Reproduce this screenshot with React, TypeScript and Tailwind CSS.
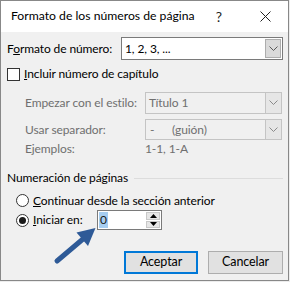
import React from "react";

const font = { fontFamily: 'Lato, "Noto Sans", sans-serif' };

const Chevron = ({ color = "#606060" }: { color?: string }) => (
	<svg width="9" height="6" viewBox="0 0 9 6">
		<path d="M0.5 0.5 L4.5 4.5 L8.5 0.5" fill="none" stroke={color} strokeWidth="1" />
	</svg>
);

const Select = ({
	value,
	disabled,
	className,
}: {
	value: React.ReactNode;
	disabled?: boolean;
	className: string;
}) => (
	<div
		className={`flex items-stretch border ${
			disabled ? "border-[#c4c4c4] bg-[#f0f0f0] text-[#6f6f6f]" : "border-[#7a7a7a] bg-white text-black"
		} ${className}`}>
		<div className="flex-1 flex items-center pl-[3px]">{value}</div>
		<div
			className={`w-[16px] flex items-center justify-center border-l ${
				disabled ? "border-[#c4c4c4] bg-[#e6e6e6]" : "border-[#adadad] bg-[#dadada] m-[1px] border"
			}`}>
			<Chevron color={disabled ? "#8a8a8a" : "#5a5a5a"} />
		</div>
	</div>
);

const Radio = ({ checked }: { checked?: boolean }) => (
	<div className="w-[13px] h-[13px] shrink-0 rounded-full border border-[#333] bg-white flex items-center justify-center">
		{checked && <div className="w-[7px] h-[7px] rounded-full bg-[#1a1a1a]" />}
	</div>
);

export default function App() {
	return (
		<div className="w-[290px] h-[282px] bg-[#ececec] relative whitespace-nowrap" style={font}>
			<div className="w-[289px] h-[281px] border border-[#888] bg-[#f0f0f0] flex flex-col text-[12px] tracking-[-0.1px] text-black leading-none">
				{/* Title bar */}
				<div className="h-[31px] bg-white flex items-center pl-[10px] shrink-0">
					<span className="text-[12.2px] tracking-normal">Formato de los números de página</span>
					<span className="ml-auto mr-[38px] text-[14px] text-[#222]">?</span>
					<svg width="11" height="11" viewBox="0 0 11 11" className="mr-[17px]">
						<path d="M0.5 0.5 L10.5 10.5 M10.5 0.5 L0.5 10.5" stroke="#222" strokeWidth="1" />
					</svg>
				</div>

				<div className="flex flex-col pl-[6px] pr-[5px]">
					{/* Formato de número */}
					<div className="mt-[5px] h-[23px] flex items-center">
						<span className="w-[114px]">
							F<span className="underline">o</span>rmato de número:
						</span>
						<Select value="1, 2, 3, ..." className="w-[162px] h-[23px]" />
					</div>

					{/* Incluir número de capítulo */}
					<div className="mt-[7px] h-[14px] flex items-center">
						<div className="w-[13px] h-[13px] border border-[#333] bg-white" />
						<span className="ml-[4px]">
							<span className="underline">I</span>ncluir número de capítulo
						</span>
					</div>

					<div className="mt-[11px] h-[22px] flex items-center text-[#6f6f6f]">
						<span className="ml-[18px] w-[120px]">Empezar con el estilo:</span>
						<Select value="Título 1" disabled className="w-[137px] h-[22px]" />
					</div>

					<div className="mt-[5px] h-[21px] flex items-center text-[#6f6f6f]">
						<span className="ml-[18px] w-[120px]">Usar separador:</span>
						<Select
							value={
								<span className="flex">
									<span className="ml-[1px] w-[22px]">-</span>
									<span>(guión)</span>
								</span>
							}
							disabled
							className="w-[137px] h-[21px]"
						/>
					</div>

					<div className="h-[16px] mt-px flex items-center text-[#6f6f6f]">
						<span className="ml-[18px] w-[120px]">Ejemplos:</span>
						<span>1-1, 1-A</span>
					</div>

					{/* Numeración de páginas */}
					<div className="mt-[13px] h-[16px] flex items-center">
						<span>Numeración de páginas</span>
						<div className="flex-1 ml-[6px] h-px bg-[#dcdcdc]" />
					</div>

					<div className="mt-[7px] h-[15px] flex items-center pl-[9px]">
						<Radio />
						<span className="ml-[4px]">
							<span className="underline">C</span>ontinuar desde la sección anterior
						</span>
					</div>

					<div className="mt-[2px] h-[20px] flex items-center pl-[9px]">
						<Radio checked />
						<span className="ml-[4px] w-[64px]">
							<span className="underline">I</span>niciar en:
						</span>
						<div className="w-[65px] h-[20px] border border-[#7a7a7a] bg-white flex items-stretch">
							<div className="flex-1 flex items-center pl-[1px]">
								<span className="bg-[#a6cdf0] px-[1px] py-[2px] text-[#1a1a1a]">0</span>
							</div>
							<div className="w-[15px] flex flex-col gap-px py-px pr-px">
								<div className="flex-1 bg-[#e6e6e6] border border-[#c8c8c8] flex items-center justify-center">
									<svg width="7" height="4" viewBox="0 0 7 4">
										<path d="M3.5 0 L7 4 L0 4 Z" fill="#000" />
									</svg>
								</div>
								<div className="flex-1 bg-[#e6e6e6] border border-[#c8c8c8] flex items-center justify-center">
									<svg width="7" height="4" viewBox="0 0 7 4">
										<path d="M0 0 L7 0 L3.5 4 Z" fill="#000" />
									</svg>
								</div>
							</div>
						</div>
					</div>

					{/* Buttons */}
					<div className="mt-[21px] flex justify-end gap-[10px]">
						<button className="w-[74px] h-[23px] border-2 border-[#0078d7] bg-[#e1e1e1] text-black text-[12.5px]">
							Aceptar
						</button>
						<button className="w-[75px] h-[23px] border border-[#adadad] bg-[#e1e1e1] text-black text-[12.5px]">
							Cancelar
						</button>
					</div>
				</div>
			</div>

			{/* Annotation arrow */}
			<svg className="absolute left-0 top-0 pointer-events-none" width="290" height="282">
				<line x1="57" y1="261" x2="83" y2="239" stroke="#2e5a97" strokeWidth="5" strokeLinecap="round" />
				<polygon points="95.5,228 88,246 76.5,232.5" fill="#2e5a97" />
			</svg>
		</div>
	);
}
